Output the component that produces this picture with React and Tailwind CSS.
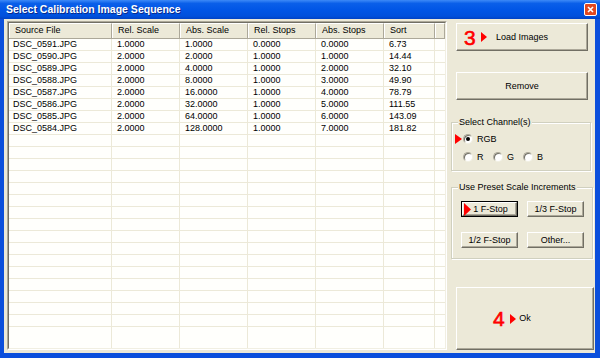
import React from "react";

const rows = [
  ["DSC_0591.JPG", "1.0000", "1.0000", "0.0000", "0.0000", "6.73"],
  ["DSC_0590.JPG", "2.0000", "2.0000", "1.0000", "1.0000", "14.44"],
  ["DSC_0589.JPG", "2.0000", "4.0000", "1.0000", "2.0000", "32.10"],
  ["DSC_0588.JPG", "2.0000", "8.0000", "1.0000", "3.0000", "49.90"],
  ["DSC_0587.JPG", "2.0000", "16.0000", "1.0000", "4.0000", "78.79"],
  ["DSC_0586.JPG", "2.0000", "32.0000", "1.0000", "5.0000", "111.55"],
  ["DSC_0585.JPG", "2.0000", "64.0000", "1.0000", "6.0000", "143.09"],
  ["DSC_0584.JPG", "2.0000", "128.0000", "1.0000", "7.0000", "181.82"],
];

const headers = ["Source File", "Rel. Scale", "Abs. Scale", "Rel. Stops", "Abs. Stops", "Sort", ""];
const widths = ["w-[103px]", "w-[68px]", "w-[68px]", "w-[68px]", "w-[68px]", "w-[51px]", "flex-1"];

function Tri({ w = 6, h = 10 }) {
  return (
    <svg width={w} height={h} viewBox={`0 0 ${w} ${h}`} className="block">
      <polygon points={`0,0 ${w},${h / 2} 0,${h}`} fill="#ff0000" />
    </svg>
  );
}

function Marker({ n, className }) {
  return (
    <div className={`absolute top-0 bottom-0 flex items-center gap-[5px] ${className}`}>
      <span className="text-[21px] leading-none text-[#ff0000] [-webkit-text-stroke:0.6px_#ff0000]">{n}</span>
      <Tri w={6} h={10} />
    </div>
  );
}

const btn =
  "relative flex items-center justify-center bg-[#ece9d8] border border-t-white border-l-white border-b-[#716f64] border-r-[#716f64] shadow-[inset_-1px_-1px_0_#aca899]";

function Radio({ checked }) {
  return (
    <div className="w-[10px] h-[10px] rounded-full bg-white border border-t-[#aca899] border-l-[#aca899] border-b-[#f1efe2] border-r-[#f1efe2] shadow-[inset_1px_1px_0_#716f64] flex items-center justify-center shrink-0">
      {checked && <div className="w-[4px] h-[4px] rounded-full bg-black" />}
    </div>
  );
}

function Group({ title, className, children }) {
  return (
    <div
      className={`relative border border-[#d0d0bf] shadow-[inset_1px_1px_0_white,1px_1px_0_white] ${className}`}
    >
      <div className="absolute -top-[7px] left-[6px] bg-[#ece9d8] px-[1px] text-[9px] leading-[12px]">
        {title}
      </div>
      {children}
    </div>
  );
}

export default function App() {
  const filler = Array.from({ length: 16 });
  return (
    <div
      className="w-[600px] h-[358px] flex flex-col bg-[#0b4fdc] text-black select-none"
      style={{ fontFamily: '"Liberation Sans", Arial, sans-serif' }}
    >
      {/* Title bar */}
      <div className="h-[19px] flex items-center justify-between pl-[6px] pr-[3px] bg-[linear-gradient(to_bottom,#3d8af7_0%,#0a5fe9_18%,#0055e5_55%,#0050dc_85%,#0042c4_100%)]">
        <span className="text-white font-bold text-[10.5px] leading-none [text-shadow:1px_1px_0_#0a2a8a]">
          Select Calibration Image Sequence
        </span>
        <div className="w-[13px] h-[13px] rounded-[2px] border border-white bg-[#e2481f] flex items-center justify-center">
          <svg width="7" height="7" viewBox="0 0 7 7">
            <path d="M1 1 L6 6 M6 1 L1 6" stroke="white" strokeWidth="1.6" />
          </svg>
        </div>
      </div>

      {/* Body */}
      <div className="flex-1 ml-[4px] mr-[5px] mb-[5px] bg-[#ece9d8] flex pl-[3px] pt-[2px] pb-[3px] pr-[1px] gap-[4px]">
        {/* List */}
        <div className="w-[440px] border border-t-[#aca899] border-l-[#aca899] border-b-white border-r-white">
          <div className="h-full border border-t-[#716f64] border-l-[#716f64] border-b-[#f1efe2] border-r-[#f1efe2] bg-[#fffffc] flex flex-col overflow-hidden">
            {/* Header */}
            <div className="h-[16px] flex border-b border-[#aca899] shrink-0">
              {headers.map((h, i) => (
                <div
                  key={i}
                  className={`${widths[i]} h-full bg-[#ece9d8] border-t border-l border-t-white border-l-white border-r border-r-[#aca899] pl-[5px] text-[9px] leading-[13px] whitespace-nowrap overflow-hidden`}
                >
                  {h}
                </div>
              ))}
            </div>
            {/* Rows */}
            {rows.map((r, ri) => (
              <div key={ri} className="h-[12px] flex border-b border-[#ece9d8] shrink-0">
                {[...r, ""].map((c, ci) => (
                  <div
                    key={ci}
                    className={`${widths[ci]} h-full ${ci < 6 ? "border-r border-[#ece9d8]" : ""} ${ci === 0 ? "pl-[4px]" : "pl-[5px]"} text-[9px] leading-[11px] whitespace-nowrap overflow-hidden`}
                  >
                    {c}
                  </div>
                ))}
              </div>
            ))}
            {filler.map((_, ri) => (
              <div key={"f" + ri} className="h-[12px] flex border-b border-[#ece9d8] shrink-0">
                {widths.map((w, ci) => (
                  <div key={ci} className={`${w} h-full ${ci < 6 ? "border-r border-[#ece9d8]" : ""}`} />
                ))}
              </div>
            ))}
            <div className="flex-1 flex">
              {widths.map((w, ci) => (
                <div key={ci} className={`${w} h-full ${ci < 6 ? "border-r border-[#ece9d8]" : ""}`} />
              ))}
            </div>
          </div>
        </div>

        {/* Right panel */}
        <div className="w-[143px] flex flex-col">
          <div className={`${btn} mt-[2px] ml-[5px] w-[132px] h-[28px]`}>
            <Marker n="3" className="left-[7px]" />
            <span className="text-[9px] leading-none">Load Images</span>
          </div>
          <div className={`${btn} mt-[21px] ml-[5px] w-[132px] h-[28px]`}>
            <span className="text-[9px] leading-none">Remove</span>
          </div>

          <Group title="Select Channel(s)" className="mt-[22px] w-[140px] h-[49px]">
            <div className="absolute left-[3px] top-[11px]">
              <Tri w={7} h={10} />
            </div>
            <div className="flex flex-col pl-[11px] pt-[10px] gap-[6px]">
              <div className="h-[12px] flex items-center gap-[4px]">
                <Radio checked />
                <span className="text-[9px] leading-none">RGB</span>
              </div>
              <div className="h-[12px] flex items-center">
                {["R", "G", "B"].map((l) => (
                  <div key={l} className="w-[30px] flex items-center gap-[4px]">
                    <Radio />
                    <span className="text-[9px] leading-none">{l}</span>
                  </div>
                ))}
              </div>
            </div>
          </Group>

          <Group title="Use Preset Scale Increments" className="mt-[16px] w-[142px] h-[72px]">
            <div className="grid grid-cols-[57px_57px] gap-x-[9px] gap-y-[15px] pl-[9px] pt-[13px]">
              <div className="relative h-[16px] border border-black">
                <div className={`${btn} h-full`}>
                  <div className="absolute left-[1px] top-[0px]">
                    <Tri w={7} h={13} />
                  </div>
                  <span className="text-[9px] leading-none pl-[2px]">1 F-Stop</span>
                </div>
              </div>
              <div className={`${btn} h-[16px]`}>
                <span className="text-[9px] leading-none">1/3 F-Stop</span>
              </div>
              <div className={`${btn} h-[16px]`}>
                <span className="text-[9px] leading-none">1/2 F-Stop</span>
              </div>
              <div className={`${btn} h-[16px]`}>
                <span className="text-[9px] leading-none">Other...</span>
              </div>
            </div>
          </Group>

          <div className={`${btn} mt-[28px] ml-[5px] w-[138px] h-[63px]`}>
            <Marker n="4" className="left-[36px]" />
            <span className="text-[9px] leading-none">Ok</span>
          </div>
        </div>
      </div>
    </div>
  );
}
